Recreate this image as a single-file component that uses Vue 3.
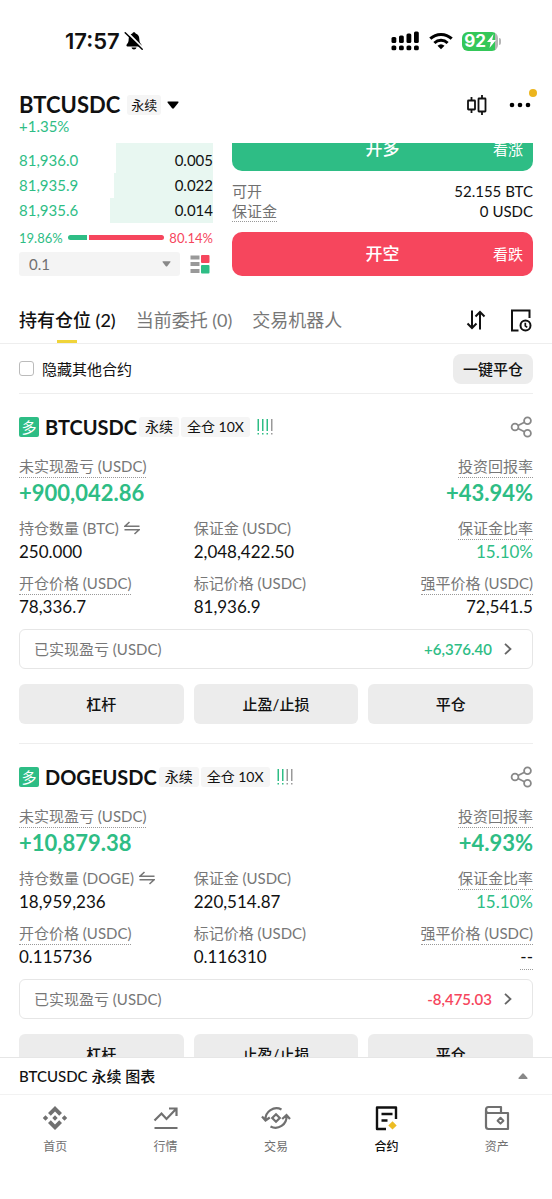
<script setup>
import { ref } from 'vue'

const precision = ref('0.1')
const hideOthers = ref(false)

const bids = [
  { price: '81,936.0', amount: '0.005', depth: 50 },
  { price: '81,935.9', amount: '0.022', depth: 51 },
  { price: '81,935.6', amount: '0.014', depth: 53 },
]

const tabs = [
  { name: '持有仓位 (2)', active: true },
  { name: '当前委托 (0)', active: false },
  { name: '交易机器人', active: false },
]

const positions = [
  {
    symbol: 'BTCUSDC',
    risk: 3,
    pnl: '+900,042.86',
    roi: '+43.94%',
    realized: '+6,376.40',
    loss: false,
    stats: [
      { label: '持仓数量 (BTC)', value: '250.000', swap: true },
      { label: '保证金 (USDC)', value: '2,048,422.50' },
      { label: '保证金比率', value: '15.10%', hint: true, green: true },
      { label: '开仓价格 (USDC)', value: '78,336.7', hint: true },
      { label: '标记价格 (USDC)', value: '81,936.9' },
      { label: '强平价格 (USDC)', value: '72,541.5', hint: true },
    ],
  },
  {
    symbol: 'DOGEUSDC',
    risk: 2,
    pnl: '+10,879.38',
    roi: '+4.93%',
    realized: '-8,475.03',
    loss: true,
    stats: [
      { label: '持仓数量 (DOGE)', value: '18,959,236', swap: true },
      { label: '保证金 (USDC)', value: '220,514.87' },
      { label: '保证金比率', value: '15.10%', hint: true, green: true },
      { label: '开仓价格 (USDC)', value: '0.115736', hint: true },
      { label: '标记价格 (USDC)', value: '0.116310' },
      { label: '强平价格 (USDC)', value: '--', hint: true, empty: true },
    ],
  },
]
</script>

<template>
  <div class="app">
    <div class="status">
      <div class="clock">
        <span>17:57</span>
        <svg width="20" height="20" viewBox="0 0 20 20">
          <path d="M10 1.2c.9 0 1.5.6 1.6 1.4 2.400.7 3.700 2.700 3.700 5.200 0 3.500 1 4.600 2 5.700.6.8.2 1.900-.8 1.900H3.500c-1 0-1.400-1.100-.8-1.900 1-1.100 2-2.200 2-5.700 0-2.500 1.300-4.500 3.700-5.200.1-.8.700-1.400 1.600-1.400zM7.500 16.600h5c-.3 1.200-1.300 1.900-2.500 1.900s-2.200-.7-2.500-1.900z" fill="#000" />
          <path d="M2.500.6l17 17" stroke="#fff" stroke-width="2" />
          <path d="M1.200 1.800l17 16.500" stroke="#000" stroke-width="1.500" stroke-linecap="round" />
        </svg>
      </div>
      <div class="signals">
        <svg width="29" height="20" viewBox="0 0 29 20">
          <rect x="0.500" y="6" width="4.800" height="6" rx="1.500" /><rect x="8" y="4.500" width="4.800" height="7.500" rx="1.500" />
          <rect x="15.500" y="2.500" width="4.800" height="9.500" rx="1.500" /><rect x="23" y="0.500" width="4.800" height="11.500" rx="1.500" />
          <rect v-for="n in 4" :key="n" :x="n * 7.5 - 7" y="14.500" width="4.800" height="4.800" rx="1.600" />
        </svg>
        <svg width="24" height="18" viewBox="0 0 24 18" fill="none" stroke="#000" stroke-width="3">
          <path d="M1.300 6.700a15.500 15.500 0 0 1 21.400 0M5.400 11a9.500 9.500 0 0 1 13.200 0" />
          <path d="M8.500 13.800a5.200 5.200 0 0 1 7 0L12 17.300z" fill="#000" stroke="none" />
        </svg>
        <div class="battery">
          <span>92</span>
          <svg width="9" height="14" viewBox="0 0 9 14"><path d="M6.500 0L0 8h3.800L2.500 14 9 6H5.200z" fill="#fff" /></svg>
        </div>
      </div>
    </div>

    <header class="head">
      <div class="pair-row">
        <button class="pair" type="button">
          <strong>BTCUSDC</strong>
          <span class="chip small">永续</span>
          <svg width="12" height="8" viewBox="0 0 12 8"><path d="M1 .5h10q1 .3.300 1.200L6.900 7.200q-.9.900-1.800 0L.7 1.700Q0 .8 1 .5z" /></svg>
        </button>
        <div class="head-icons">
          <button type="button" aria-label="K线">
            <svg width="20" height="20" viewBox="0 0 20 20" fill="none" stroke="#111" stroke-width="1.800">
              <path d="M4.500 2v3.500M4.500 14.500V18M15 0v3.500M15 16.500V20" />
              <rect x="1" y="5.500" width="7" height="9" rx=".5" /><rect x="11.500" y="3.500" width="7" height="13" rx=".5" />
            </svg>
          </button>
          <button class="more" type="button" aria-label="更多">
            <svg width="22" height="6" viewBox="0 0 22 6"><circle cx="3" cy="3" r="2.300" /><circle cx="11" cy="3" r="2.300" /><circle cx="19" cy="3" r="2.300" /></svg>
            <i class="dot"></i>
          </button>
        </div>
      </div>
      <div class="change">+1.35%</div>
    </header>

    <main class="scroll">
      <section class="trade">
        <div class="book">
          <div class="book-edge"><i></i></div>
          <div v-for="b in bids" :key="b.price" class="bid">
            <i class="depth" :style="{ width: b.depth + '%' }"></i>
            <span class="green">{{ b.price }}</span><span>{{ b.amount }}</span>
          </div>
          <div class="ratio">
            <span class="green">19.86%</span>
            <div class="bar"><i class="buy"></i><i class="sell"></i></div>
            <span class="red">80.14%</span>
          </div>
          <div class="precision">
            <div class="select">
              <select v-model="precision" aria-label="价格精度"><option>0.1</option><option>1</option></select>
              <svg width="9" height="6" viewBox="0 0 9 6"><path d="M1 .3h7q1 .2.300 1L5.200 5.200q-.7.600-1.400 0L.7 1.300Q0 .5 1 .3z" fill="#888" /></svg>
            </div>
            <button type="button" aria-label="盘口布局">
              <svg width="20" height="20" viewBox="0 0 20 20">
                <path d="M.5 1.500h9v4h-9zM.5 8h9v4h-9zM.5 15h9v4h-9z" fill="#999" />
                <rect x="11" y="1" width="8.500" height="8" rx="1" fill="#f6465d" /><rect x="11" y="11" width="8.500" height="8.500" rx="1" fill="#2ebd85" />
              </svg>
            </button>
          </div>
        </div>
        <div class="order">
          <button class="side long" type="button"><span>开多</span><small>看涨</small></button>
          <dl>
            <div><dt>可开</dt><dd>52.155 BTC</dd></div>
            <div><dt class="hint">保证金</dt><dd>0 USDC</dd></div>
          </dl>
          <button class="side short" type="button"><span>开空</span><small>看跌</small></button>
        </div>
      </section>

      <nav class="tabs">
        <button v-for="t in tabs" :key="t.name" type="button" class="tab" :class="{ active: t.active }">{{ t.name }}</button>
        <div class="tab-icons">
          <button type="button" aria-label="排序">
            <svg width="20" height="20" viewBox="0 0 20 20" fill="none" stroke="#111" stroke-width="2">
              <path d="M6 .5v17M1.500 13.500L6 18l4.500-4.500M14 19.500v-17M9.500 6.500L14 2l4.500 4.500" />
            </svg>
          </button>
          <button type="button" aria-label="历史">
            <svg width="22" height="23" viewBox="0 0 22 23" fill="none" stroke="#111" stroke-width="2">
              <path d="M8.500 21.500H2V1.500h17.500V9" /><circle cx="15.500" cy="16.500" r="5" /><path d="M15.300 13.800v3l1.900 1.500" stroke-width="1.700" />
            </svg>
          </button>
        </div>
      </nav>

      <div class="filter">
        <label><input v-model="hideOthers" type="checkbox" />隐藏其他合约</label>
        <button type="button">一键平仓</button>
      </div>

      <article v-for="p in positions" :key="p.symbol" class="position">
        <div class="title">
          <span class="badge">多</span>
          <h2>{{ p.symbol }}</h2>
          <span class="chip">永续</span>
          <span class="chip">全仓 10X</span>
          <svg class="risk" width="17" height="16" viewBox="0 0 17 16">
            <g v-for="n in 4" :key="n" :fill="n <= p.risk ? '#2ebd85' : '#999'">
              <rect :x="n * 4.5 - 4" y="0" width="1.500" height="12" /><rect :x="n * 4.5 - 4" y="14" width="1.500" height="1.500" />
            </g>
          </svg>
          <button class="share" type="button" aria-label="分享">
            <svg width="23" height="22" viewBox="0 0 23 22" fill="none" stroke="#888" stroke-width="1.800">
              <circle cx="5" cy="11" r="3.400" /><circle cx="17.500" cy="4.700" r="3.400" /><circle cx="17.500" cy="17.300" r="3.400" />
              <path d="M8 9.500l6.500-3.300M8 12.500l6.500 3.300" />
            </svg>
          </button>
        </div>

        <div class="summary">
          <div class="stat"><span class="label hint">未实现盈亏 (USDC)</span><strong>{{ p.pnl }}</strong></div>
          <div class="stat end"><span class="label hint">投资回报率</span><strong>{{ p.roi }}</strong></div>
        </div>

        <div class="stats">
          <div v-for="(s, i) in p.stats" :key="s.label" class="stat" :class="{ end: i % 3 === 2 }">
            <span class="label" :class="{ hint: s.hint }">{{ s.label }}<svg v-if="s.swap" width="16" height="14" viewBox="0 0 16 14" fill="none" stroke="#777" stroke-width="1.500"><path d="M5.500 1L1 5.200h14.500M.5 8.800H15L10.500 13" /></svg></span>
            <span class="value" :class="{ green: s.green }"><span :class="{ empty: s.empty }">{{ s.value }}</span></span>
          </div>
        </div>

        <button class="realized" type="button">
          <span>已实现盈亏 (USDC)</span>
          <b :class="p.loss ? 'red' : 'green'">{{ p.realized }}</b>
          <svg width="8" height="12" viewBox="0 0 8 12" fill="none" stroke="#666" stroke-width="1.800"><path d="M1 .8L6.500 6 1 11.200" /></svg>
        </button>

        <div class="actions">
          <button type="button">杠杆</button>
          <button type="button">止盈/止损</button>
          <button type="button">平仓</button>
        </div>
      </article>
    </main>

    <footer>
      <button class="chart" type="button">
        <span>BTCUSDC 永续 图表</span>
        <svg width="10" height="6" viewBox="0 0 10 6"><path d="M4.200.7q.8-.8 1.600 0L9.600 5q.3.800-.6.900H1Q.1 5.800.4 5z" fill="#888" /></svg>
      </button>
      <nav class="bottom">
        <a href="#home">
          <svg width="26" height="26" viewBox="0 0 26 26" fill="#707070">
            <path d="M13 1l7 7-2.800 2.800L13 6.600l-4.200 4.200L6 8zM13 25l7-7-2.800-2.800L13 19.400l-4.200-4.200L6 18zM13 10.300l2.700 2.700-2.700 2.700-2.700-2.700zM3.500 10.300L6.200 13l-2.700 2.700L.8 13zM22.500 10.300l2.700 2.700-2.700 2.700-2.700-2.700z" />
          </svg>首页
        </a>
        <a href="#markets">
          <svg width="26" height="26" viewBox="0 0 26 26" fill="none" stroke="#707070" stroke-width="2.200">
            <path d="M1.500 15.500l7-7 5 5.500L23 4M16 3.500h7.500V11M1.500 23h23" />
          </svg>行情
        </a>
        <a href="#trade">
          <svg width="30" height="26" viewBox="0 0 30 26" fill="none" stroke="#707070" stroke-width="2.200">
            <path d="M20.500 4.500A11 11 0 0 0 4.500 15M1 11.500l3.500 4 4.300-3M9.500 21.500A11 11 0 0 0 25.500 11M21.200 14l4.300-4 3.500 4M15 9.200l3.800 3.800-3.800 3.800-3.800-3.800z" />
          </svg>交易
        </a>
        <a href="#futures" class="current">
          <svg width="26" height="26" viewBox="0 0 26 26" fill="none" stroke="#111" stroke-width="2.400" stroke-linejoin="round">
            <path d="M13 24H4V2.500h19V14M8.500 9h11M8.500 15.500h6" /><path d="M19.500 16.200l4.200 4.200-4.200 4.200-4.200-4.200z" fill="#ecbc24" stroke="none" />
          </svg>合约
        </a>
        <a href="#assets">
          <svg width="26" height="26" viewBox="0 0 26 26" fill="none" stroke="#707070" stroke-width="2.200" stroke-linejoin="round">
            <path d="M2 5v16.500q0 2.500 2.500 2.500H24V8H4.500Q2 8 2 5t2.500-3H17v6" /><path d="M16.500 12.800l2.900 2.900-2.900 2.900-2.900-2.900z" stroke-width="2" />
          </svg>资产
        </a>
      </nav>
    </footer>
  </div>
</template>

<style>
body {
  background: #fff;
}
</style>

<style scoped>
* {
  box-sizing: border-box;
}
.app {
  display: flex;
  flex-direction: column;
  height: 100vh;
  overflow: hidden;
  color: #111;
  font: 15px/20px Lato, "Noto Sans CJK SC", sans-serif;
}
button {
  margin: 0;
  padding: 0;
  border: 0;
  background: none;
  color: inherit;
  font: inherit;
  cursor: pointer;
}
svg {
  display: block;
  flex: none;
}
.green {
  color: #2ebd85;
}
.red {
  color: #f6465d;
}

.status {
  display: flex;
  justify-content: space-between;
  align-items: center;
  padding: 28px 54px 0 65px;
  height: 54px;
  flex: none;
}
.clock {
  display: flex;
  align-items: center;
  gap: 4px;
  font: 600 22px/26px Inter, sans-serif;
}
.signals {
  display: flex;
  align-items: center;
  gap: 9px;
}
.battery {
  position: relative;
  display: flex;
  align-items: center;
  justify-content: center;
  gap: 1px;
  width: 36px;
  height: 19px;
  border-radius: 6px;
  background: linear-gradient(90deg, #34c759 92%, #b5b5b5 92%);
  color: #fff;
  font: 700 17px/19px Inter, sans-serif;
}
.battery::after {
  content: "";
  position: absolute;
  right: -3px;
  top: 6px;
  width: 2px;
  height: 7px;
  border-radius: 0 2px 2px 0;
  background: #b5b5b5;
}

.head {
  flex: none;
  height: 89px;
  padding: 38px 21px 0 19px;
}
.pair-row {
  display: flex;
  justify-content: space-between;
  align-items: center;
  height: 26px;
}
.pair {
  display: flex;
  align-items: center;
}
.pair strong {
  font-size: 22px;
  line-height: 26px;
}
.pair svg {
  margin-left: 6px;
}
.chip {
  padding: 0 6px;
  border-radius: 3px;
  background: #f5f5f5;
  font-size: 14px;
  line-height: 20px;
  white-space: nowrap;
}
.chip.small {
  margin-left: 7px;
  padding: 0 4px;
  font-size: 13px;
}
.head-icons {
  display: flex;
  align-items: center;
  gap: 22px;
}
.more {
  position: relative;
}
.dot {
  position: absolute;
  right: -6px;
  top: -13px;
  width: 8px;
  height: 8px;
  border-radius: 50%;
  background: #ecb51e;
}
.change {
  color: #2ebd85;
  font-size: 15px;
  line-height: 17px;
}

.scroll {
  flex: 1;
  min-height: 0;
  overflow: hidden;
}
.trade {
  display: grid;
  grid-template-columns: 194fr 301fr;
  gap: 19px;
  margin: -16px 19px 0;
}
.book-edge {
  display: flex;
  justify-content: flex-end;
  height: 21px;
}
.book-edge i {
  width: 50%;
  background: #e8f7f1;
}
.bid {
  position: relative;
  display: flex;
  justify-content: space-between;
  line-height: 25px;
}
.bid span {
  position: relative;
}
.depth {
  position: absolute;
  inset: 0 0 0 auto;
  background: #e8f7f1;
}
.ratio {
  display: flex;
  align-items: center;
  gap: 5px;
  height: 29px;
  font-size: 13px;
}
.bar {
  display: flex;
  flex: 1;
  gap: 2px;
  height: 5px;
}
.buy {
  flex: 20;
  border-radius: 3px 0 0 3px;
  background: #2ebd85;
}
.sell {
  flex: 80;
  border-radius: 0 3px 3px 0;
  background: #f6465d;
}
.precision {
  display: flex;
  align-items: center;
  gap: 10px;
  padding-right: 3px;
}
.select {
  position: relative;
  flex: 1;
}
.select select {
  display: block;
  width: 100%;
  height: 24px;
  padding: 0 10px;
  border: 0;
  border-radius: 3px;
  background: #f4f4f4;
  color: #707070;
  font: inherit;
  appearance: none;
}
.select svg {
  position: absolute;
  right: 9px;
  top: 9px;
}
.side {
  position: relative;
  display: block;
  width: 100%;
  height: 44px;
  border-radius: 10px;
  color: #fff;
  font-size: 17px;
  font-weight: 500;
}
.side small {
  position: absolute;
  right: 10px;
  top: 12px;
  font-size: 15px;
  font-weight: 400;
}
.long {
  background: #2ebd85;
}
.short {
  background: #f6465d;
}
.order dl {
  margin: 0;
  padding: 10px 0 11px;
}
.order dl div {
  display: flex;
  justify-content: space-between;
  align-items: flex-start;
  height: 20px;
}
dt,
dd {
  margin: 0;
}
dt {
  color: #707070;
}
.hint {
  border-bottom: 1px dotted #999;
}

.tabs {
  display: flex;
  align-items: center;
  gap: 20px;
  height: 68px;
  padding: 21px 20px 0 19px;
  border-bottom: 1px solid #eee;
}
.tab {
  position: relative;
  height: 46px;
  color: #777;
  font-size: 18px;
}
.tab.active {
  color: #111;
  font-weight: 500;
}
.tab.active::after {
  content: "";
  position: absolute;
  left: 50%;
  bottom: 0;
  width: 20px;
  height: 3px;
  margin-left: -10px;
  background: #f0d43a;
}
.tab-icons {
  display: flex;
  align-items: center;
  gap: 24px;
  margin-left: auto;
}
.filter {
  display: flex;
  justify-content: space-between;
  align-items: center;
  height: 50px;
  margin: 0 19px;
  border-bottom: 1px solid #eee;
}
.filter label {
  display: flex;
  align-items: center;
  gap: 8px;
}
.filter input {
  width: 15px;
  height: 15px;
  margin: 0;
  border: 1px solid #bbb;
  border-radius: 3px;
  appearance: none;
}
.filter button {
  height: 30px;
  padding: 0 10px;
  border-radius: 8px;
  background: #ececec;
  font-weight: 500;
}

.position {
  margin: 0 19px;
  padding: 23px 0 19px;
  border-bottom: 1px solid #eee;
}
.title {
  display: flex;
  align-items: center;
  height: 20px;
}
.badge {
  width: 20px;
  border-radius: 2px;
  background: #2ebd85;
  color: #fff;
  font-size: 15px;
  text-align: center;
}
.title h2 {
  margin: 0 2px 0 6px;
  font-size: 20px;
  font-weight: 700;
}
.title .chip + .chip {
  margin-left: 2px;
}
.risk {
  margin-left: 7px;
}
.share {
  margin-left: auto;
}
.summary {
  display: flex;
  justify-content: space-between;
  margin-top: 18px;
}
.stat {
  display: flex;
  flex-direction: column;
  align-items: flex-start;
}
.stat.end {
  align-items: flex-end;
}
.label {
  display: flex;
  align-items: center;
  gap: 5px;
  height: 23px;
  border-bottom: 1px dotted transparent;
  color: #777;
  line-height: 22px;
  white-space: nowrap;
}
.label.hint {
  border-color: #999;
}
.stat strong {
  color: #2ebd85;
  font-size: 22px;
  line-height: 30px;
}
.stats {
  display: grid;
  grid-template-columns: repeat(3, 1fr);
  gap: 8px 10px;
  margin-top: 9px;
}
.value {
  height: 24px;
  font-size: 17px;
  line-height: 24px;
}
.empty {
  display: block;
  border-bottom: 1px dotted #999;
}
.realized {
  display: flex;
  align-items: center;
  width: 100%;
  height: 40px;
  margin-top: 10px;
  padding: 0 20px 0 14px;
  border: 1px solid #e6e6e6;
  border-radius: 6px;
}
.realized span {
  color: #777;
}
.realized b {
  margin: 0 12px 0 auto;
  font-weight: 600;
}
.actions {
  display: grid;
  grid-template-columns: repeat(3, 1fr);
  gap: 10px;
  margin-top: 15px;
}
.actions button {
  height: 40px;
  border-radius: 6px;
  background: #ececec;
  font-weight: 500;
}

footer {
  flex: none;
  background: #fff;
}
.chart {
  display: flex;
  justify-content: space-between;
  align-items: center;
  width: 100%;
  height: 38px;
  padding: 0 24px 0 19px;
  border-top: 1px solid #e6e6e6;
  border-bottom: 1px solid #f2f2f2;
  font-size: 15px;
  font-weight: 500;
}
.bottom {
  display: grid;
  grid-template-columns: repeat(5, 1fr);
  height: 104px;
  padding-top: 10px;
}
.bottom a {
  display: flex;
  flex-direction: column;
  align-items: center;
  gap: 6px;
  color: #707070;
  font-size: 12px;
  line-height: 20px;
  text-decoration: none;
}
.bottom .current {
  color: #111;
  font-weight: 500;
}
</style>
